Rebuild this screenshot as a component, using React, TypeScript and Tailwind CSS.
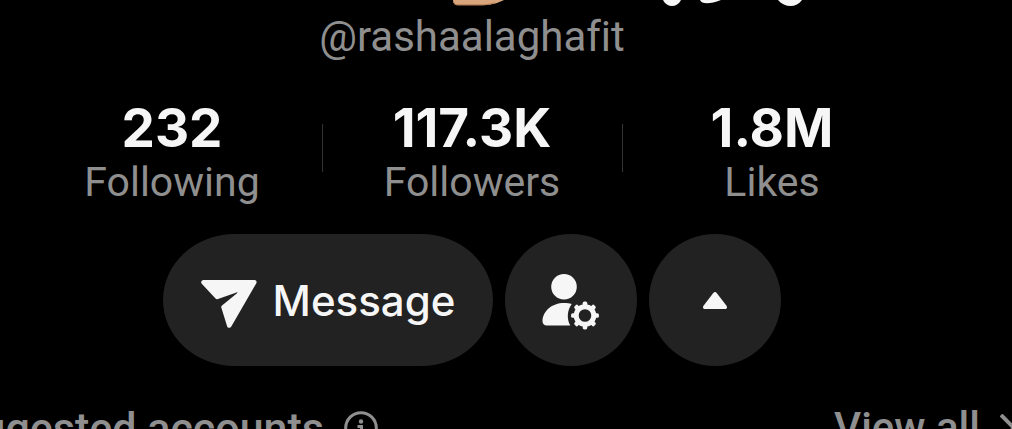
import React from 'react';

const stats = [
  { value: '232', label: 'Following' },
  { value: '117.3K', label: 'Followers' },
  { value: '1.8M', label: 'Likes' },
];

const gearTeeth = [0, 45, 90, 135, 180, 225, 270, 315];

function SendIcon() {
  return (
    <svg width="56" height="50" viewBox="0 0 56 50" fill="currentColor" className="mt-2" aria-hidden="true">
      <path d="M2.6 1H53.4C55.3 1 56.2 2.8 55.2 4.5L30.3 47.5C29.3 49.4 26.6 49.2 26.1 47.2L20.3 28.6C20 27.6 20.3 27 21 26.4L36 14.2C36.8 13.5 36.4 13.1 35.5 13.4L17 20.1C16 20.5 15.2 20.3 14.5 19.6L1 5.1C-0.6 3.4 0.3 1 2.6 1Z" />
    </svg>
  );
}

function UserGearIcon() {
  return (
    <svg width="58" height="56" viewBox="0 0 58 56" fill="currentColor" className="mt-1" aria-hidden="true">
      <circle cx="22" cy="12.8" r="12.8" />
      <path d="M22 29C25 29 27.5 29.3 29.7 30C25.2 36 24.5 45 28.3 51.5H5C2 51.5 0.5 49.8 0.5 47C0.8 37 10 29 22 29Z" />
      <circle cx="43" cy="41.5" r="8.8" fill="none" stroke="currentColor" strokeWidth="5" />
      {gearTeeth.map((angle) => (
        <rect
          key={angle}
          x="40.7"
          y="27.6"
          width="4.6"
          height="6"
          rx="1.6"
          transform={`rotate(${angle} 43 41.5)`}
        />
      ))}
    </svg>
  );
}

function InfoIcon() {
  return (
    <svg width="34" height="34" viewBox="0 0 34 34" fill="none" aria-hidden="true">
      <circle cx="17" cy="17" r="15.3" stroke="currentColor" strokeWidth="3" />
      <circle cx="17" cy="10.5" r="2.2" fill="currentColor" />
      <path d="M13.5 15.5H17.5V24.5M13 24.5H22" stroke="currentColor" strokeWidth="3" />
    </svg>
  );
}

// Lower edge of the display name that is scrolled out at the top
function DisplayNameEdge() {
  return (
    <svg width="660" height="7" viewBox="142 0 660 7" className="shrink-0" aria-hidden="true">
      <path d="M453 0H504C498 3 490 5.5 482 5.2H458C455 5.2 453 3.5 453 0Z" fill="#d9a57c" />
      <path d="M453.5 2C454 4 455.5 4.8 458 4.8H482C487 4.8 491 4 495 2.8" fill="none" stroke="#b27b50" />
      <path d="M663 0H681C679 4 675.5 6 672 6C668.5 6 665 4 663 0Z" fill="#f6f6f6" />
      <path d="M700 0H721C715 2.5 711 3.2 707 3.2C703 3.2 701 2.2 700 0Z" fill="#f6f6f6" />
      <path d="M778 0H802C799 4 795 6 790.5 6C786 6 781.5 4 778 0Z" fill="#f6f6f6" />
    </svg>
  );
}

export default function App() {
  return (
    <main className="h-screen overflow-hidden bg-black font-['Roboto','Liberation_Sans',sans-serif] text-[#f6f6f6] [font-variant-ligatures:none]">
      <div className="flex flex-col items-center pr-[68px]">
        <DisplayNameEdge />
        <p className="mt-1 text-[42px] leading-[52px] text-[#8f8f8f]">@rashaalaghafit</p>

        <dl className="mt-9 flex">
          {stats.map((stat, i) => (
            <div key={stat.label} className="flex w-[300px] items-start">
              <div className="flex flex-1 flex-col-reverse items-center">
                <dt className="text-[41px] leading-[48px] text-[#8f8f8f]">{stat.label}</dt>
                <dd className="font-['Inter','Liberation_Sans',sans-serif] text-[53px] leading-[59px] font-bold">{stat.value}</dd>
              </div>
              {i < stats.length - 1 && <span className="mt-[25px] -mr-px h-12 w-px bg-[#333333]" />}
            </div>
          ))}
        </dl>

        <div className="mt-7 flex gap-3">
          <button
            type="button"
            className="flex h-[132px] w-[330px] items-center justify-center gap-4 rounded-[72px/66px] bg-[#222222] font-['Inter','Liberation_Sans',sans-serif] text-[42px] font-medium"
          >
            <SendIcon />
            Message
          </button>
          <button
            type="button"
            aria-label="Manage following"
            className="flex size-[132px] items-center justify-center rounded-full bg-[#222222]"
          >
            <UserGearIcon />
          </button>
          <button
            type="button"
            aria-label="Hide suggestions"
            className="flex size-[132px] items-center justify-center rounded-full bg-[#222222]"
          >
            <svg width="24" height="17" viewBox="0 0 24 17" fill="currentColor" aria-hidden="true">
              <path d="M10.3 0.9C11.2 -0.2 12.8 -0.2 13.7 0.9L23.5 13.8C24.5 15.2 24 17 22.2 17H1.8C0 17 -0.5 15.2 0.5 13.8Z" />
            </svg>
          </button>
        </div>
      </div>

      <div className="mt-9 flex items-center justify-between text-[#8f8f8f]">
        <div className="flex items-center gap-5">
          <h2 className="flex w-[324px] justify-end overflow-hidden text-[43px] leading-[52px] font-medium whitespace-nowrap">
            Suggested accounts
          </h2>
          <button type="button" aria-label="About suggested accounts">
            <InfoIcon />
          </button>
        </div>
        <a href="#all" className="flex items-center gap-5 text-[42px] leading-[52px] font-medium">
          View all
          <svg width="12" height="28" viewBox="0 0 12 28" fill="none" stroke="currentColor" strokeWidth="4" aria-hidden="true">
            <path d="M1 1L14 14L1 27" />
          </svg>
        </a>
      </div>
    </main>
  );
}
